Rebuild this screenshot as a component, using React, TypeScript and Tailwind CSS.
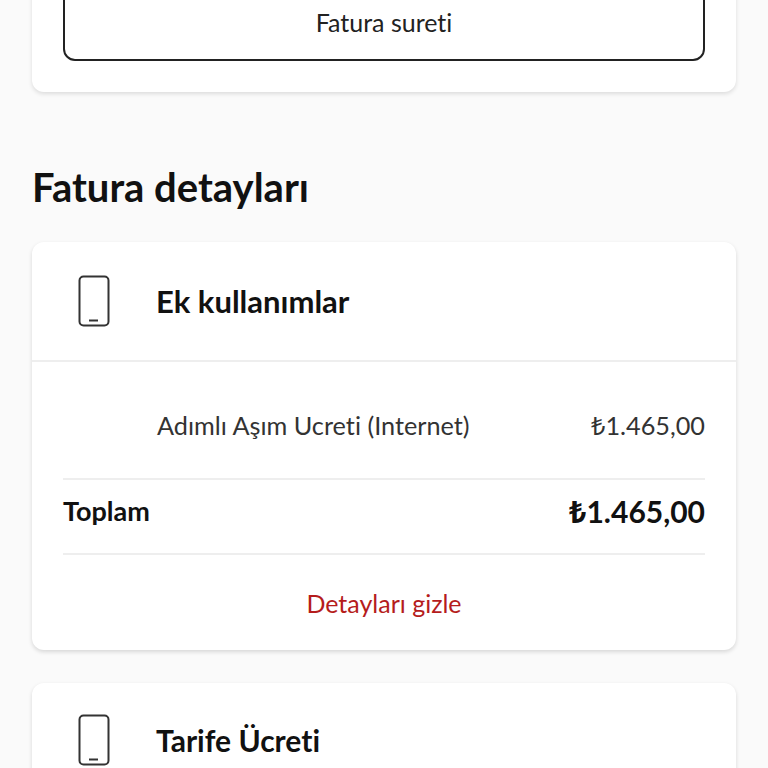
import React from 'react';

const font = { fontFamily: 'Lato, "Noto Sans", sans-serif' };

function PhoneIcon() {
  return (
    <svg width="32" height="52" viewBox="0 0 32 52" fill="none" className="shrink-0 text-[#333]">
      <rect x="1.5" y="1.5" width="29" height="49" rx="4" stroke="currentColor" strokeWidth="2" />
      <path d="M11 45.5h9" stroke="currentColor" strokeWidth="2" />
    </svg>
  );
}

function CardHeader({ title, className, titleClass }: { title: string; className: string; titleClass: string }) {
  return (
    <div className={`flex items-center pl-[46px] ${className}`}>
      <PhoneIcon />
      <h3 className={`ml-[46px] leading-9 font-bold text-[#111] ${titleClass}`}>{title}</h3>
    </div>
  );
}

function Price({ value }: { value: string }) {
  return (
    <span>
      <span className="font-['Noto_Sans']">₺</span>
      {value}
    </span>
  );
}

export default function App() {
  return (
    <div style={font} className="h-[768px] overflow-hidden bg-[#fafafa] px-8 [font-variant-ligatures:none]">
      <div className="-mt-4 rounded-b-xl bg-white px-[31px] pb-[31px] shadow-[0_2px_4px_rgba(0,0,0,0.12)]">
        <button
          type="button"
          className="block h-[77px] w-full rounded-xl border-2 border-[#222] text-[25px] text-[#222]"
        >
          Fatura sureti
        </button>
      </div>

      <h2 className="mt-[70px] h-[50px] text-[40px] leading-[50px] font-bold text-[#111]">Fatura detayları</h2>

      <div className="mt-[30px] rounded-xl bg-white shadow-[0_2px_4px_rgba(0,0,0,0.14)]">
        <CardHeader title="Ek kullanımlar" className="h-[118px]" titleClass="text-[31px]" />
        <div className="border-t-2 border-[#eeeeee] px-[31px]">
          <div className="flex h-[116px] items-center justify-between pt-3 pl-[94px] text-[25.25px] text-[#333]">
            <span>Adımlı Aşım Ucreti (Internet)</span>
            <Price value="1.465,00" />
          </div>
          <div className="flex h-[77px] items-center justify-between border-y-2 border-[#eeeeee] pb-[11px] font-bold text-[#111]">
            <span className="text-[27px]">Toplam</span>
            <span className="text-[30px]">
              <Price value="1.465,00" />
            </span>
          </div>
          <div className="flex h-[95px] items-center justify-center pt-[3px] text-[25px] text-[#b51c1c]">Detayları gizle</div>
        </div>
      </div>

      <div className="mt-[33px] rounded-t-xl bg-white pb-8 shadow-[0_2px_4px_rgba(0,0,0,0.14)]">
        <CardHeader title="Tarife Ücreti" className="h-[114px]" titleClass="text-[30px]" />
      </div>
    </div>
  );
}
